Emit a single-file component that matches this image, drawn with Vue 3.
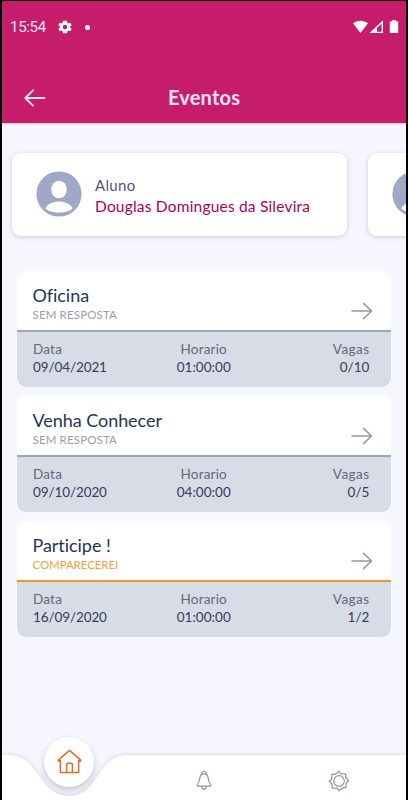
<script setup>
const students = [
  { id: 1, role: 'Aluno', name: 'Douglas Domingues da Silevira' },
  { id: 2 }
]
const events = [
  { title: 'Oficina', status: 'SEM RESPOSTA', date: '09/04/2021', time: '01:00:00', seats: '0/10', key: 'oficina' },
  { title: 'Venha Conhecer', status: 'SEM RESPOSTA', date: '09/10/2020', time: '04:00:00', seats: '0/5', key: 'venha' },
  { title: 'Participe !', status: 'COMPARECEREI', date: '16/09/2020', time: '01:00:00', seats: '1/2', key: 'participe', going: true }
]
</script>

<template>
  <div class="frame">
    <div class="screen">
      <header class="header">
        <div class="statusbar">
          <span class="clock">15:54</span>
          <svg class="gear" viewBox="2 2 20 20"><path fill="#fff" fill-rule="evenodd" d="M19.4 13a7.500 7.500 0 0 0 0-2l2.100-1.600-2-3.500-2.500 1a7 7 0 0 0-1.700-1L15 3H9l-.4 2.900a7 7 0 0 0-1.700 1l-2.500-1-2 3.500L4.600 11a7.500 7.500 0 0 0 0 2l-2.100 1.600 2 3.500 2.500-1a7 7 0 0 0 1.700 1L9 21h6l.4-2.900a7 7 0 0 0 1.700-1l2.500 1 2-3.500zM12 15.300a3.300 3.300 0 1 1 0-6.600 3.300 3.300 0 0 1 0 6.600z" /></svg>
          <i class="dot"></i>
          <svg class="signals" viewBox="0 0 46 14">
            <path fill="#fff" d="M0 3.200C4-.2 11-.2 15 3.200L7.500 13z" />
            <path fill="#fff" fill-rule="evenodd" d="M16.500 13 30 .3V13zM24 11.700h4.600V3.600L24 8z" />
            <path fill="#fff" d="M39 .2h4v1h1.500q.7 0 .7.800v10.300q0 .8-.8.800h-6.800q-.8 0-.8-.8V2q0-.8.8-.8H39z" />
          </svg>
        </div>
        <div class="titlebar">
          <svg class="back" viewBox="0 0 22 18"><path d="M20.500 9H1.500M9 1.300 1.300 9 9 16.700" /></svg>
          <h1>Eventos</h1>
        </div>
      </header>

      <section class="students">
        <article v-for="s in students" :key="s.id" class="student">
          <svg class="avatar" viewBox="0 0 46 46">
            <circle cx="23" cy="23" r="22.600" fill="#9fa8c7" />
            <ellipse cx="23" cy="18.500" rx="7.800" ry="8.700" fill="#fff" />
            <path fill="#fff" d="M9.300 37.200C12 32.500 18 30.500 23 30.500s11 2 13.700 6.700C32 43 14 43 9.300 37.200z" />
          </svg>
          <div v-if="s.name">
            <div class="role">{{ s.role }}</div>
            <div class="name">{{ s.name }}</div>
          </div>
        </article>
      </section>

      <main class="events">
        <article v-for="e in events" :key="e.key" class="event" :class="{ going: e.going }">
          <div class="summary">
            <div>
              <h2>{{ e.title }}</h2>
              <div class="answer">{{ e.status }}</div>
            </div>
            <svg class="go" viewBox="0 0 22 18"><path d="M1 9H20M12.500 1.300 20.500 9l-8 7.700" /></svg>
          </div>
          <div class="details">
            <div><span class="label">Data</span><span class="value date">{{ e.date }}</span></div>
            <div class="center"><span class="label">Horario</span><span class="value">{{ e.time }}</span></div>
            <div class="right"><span class="label">Vagas</span><span class="value">{{ e.seats }}</span></div>
          </div>
        </article>
      </main>

      <nav class="nav">
        <svg class="wave" viewBox="0 0 404 66">
          <path fill="#fff" d="M0 21H7C38 21 36 62 67 62S94 21 125 21H404V66H0z" />
        </svg>
        <div class="tab home">
          <span class="bubble">
            <svg viewBox="0 0 26 26"><path d="M2.800 12.600H1.500V11.300L13 1.500l11.500 9.800v1.300h-1.300M3.500 12v12.500h19V12M10 24.500V16q0-1.200 1.200-1.200h3.600q1.200 0 1.200 1.200v8.500" /></svg>
          </span>
        </div>
        <div class="tab">
          <svg class="bell" viewBox="0 0 16 20"><path d="M5.800 4.200a2.300 2.300 0 1 1 4.400 0M8 3.800c-2.900 0-4 1.800-4.200 4.500C3.600 12 2.700 13.200 1.200 14.600q-.7 1.600.9 1.600h11.800q1.600 0 .9-1.600C13.300 13.200 12.400 12 12.200 8.300 12 5.600 10.900 3.800 8 3.800zM5.600 16.700a2.400 2.400 0 0 0 4.800 0" /></svg>
        </div>
        <div class="tab">
          <svg class="settings" viewBox="0 0 22 22">
            <path d="M11 1.200Q12.200 4 14 3.800T17.900 4.100Q17.200 6.800 18.200 8T20.800 11Q18 12.200 18.200 14T17.900 17.900Q15.200 17.200 14 18.200T11 20.800Q9.800 18 8 18.200T4.100 17.900Q4.800 15.200 3.800 14T1.200 11Q4 9.800 3.800 8T4.100 4.100Q6.800 4.800 8 3.800T11 1.200z" />
            <circle cx="11" cy="11" r="5.300" />
          </svg>
        </div>
      </nav>
    </div>
  </div>
</template>

<style>
body { margin: 0; background: #000; }
</style>

<style scoped>
* { box-sizing: border-box; }
.frame { height: 800px; padding: 1px 2px 0; background: #000; font-family: Lato, "Noto Sans", sans-serif; }
.screen { height: 799px; display: flex; flex-direction: column; overflow: hidden; background: #f6f7fe; }
svg { display: block; flex: none; }
.header { height: 121.500px; flex: none; background: #c51d6a; color: #fff; box-shadow: 0 1px 2px #ddbccf; }
.statusbar { height: 52px; display: flex; align-items: center; padding: 0 7px 0 8px; }
.clock { width: 37px; font: 15px Roboto, sans-serif; letter-spacing: -.3px; color: #ffe6f3; }
.gear { width: 14px; height: 14px; margin-left: 10.500px; }
.dot { width: 5px; height: 5px; margin-left: 13px; border-radius: 50%; background: #fff; }
.signals { width: 46px; height: 14px; margin-left: auto; }
.titlebar { height: 69px; padding: 20px 22px 0; display: grid; grid-template-columns: 22px 1fr 22px; align-items: center; }
.back { width: 22px; height: 18px; fill: none; stroke: #ffe5f3; stroke-width: 1.800; stroke-linecap: round; stroke-linejoin: round; }
h1 { margin: 0; padding-bottom: 2px; text-align: center; font-size: 20px; line-height: 26px; font-weight: 700; letter-spacing: .2px; color: #ffe3f1; }
.students { display: flex; gap: 20.500px; padding: 30px 0 0 10px; height: 149px; flex: none; }
.student { width: 335px; height: 83.500px; flex: none; display: flex; align-items: center; gap: 13px; padding-left: 24px; border-radius: 9px; background: #fff; box-shadow: 0 1px 5px rgba(55, 60, 85, .23); }
.avatar { width: 46px; height: 46px; }
.role { font-size: 15px; line-height: 21px; letter-spacing: .35px; color: #4f576f; padding-top: 3px; }
.name { font-size: 15.500px; line-height: 21px; letter-spacing: .2px; color: #ad0058; white-space: nowrap; }
.events { display: flex; flex-direction: column; gap: 10px; padding: 0 15.500px 0 15px; }
.event { height: 115px; padding-bottom: .5px; border-radius: 9px; overflow: hidden; background: #fff; box-shadow: 0 0 4px rgba(255, 255, 255, .9); }
.summary { height: 60px; display: flex; justify-content: space-between; padding: 12px 18px 0 15.500px; border-bottom: 2px solid #9ba5bd; }
h2 { margin: 0; font-size: 18px; line-height: 23px; font-weight: 400; letter-spacing: -.05px; color: #263453; }
.answer { font-size: 11.500px; line-height: 15px; letter-spacing: .15px; color: #9a9eaf; }
.going .summary { border-color: #e99a2d; }
.going .answer { color: #eea23c; letter-spacing: -.08px; }
.go { width: 22px; height: 18px; margin-top: 18px; fill: none; stroke: #9499ab; stroke-width: 1.600; stroke-linecap: round; stroke-linejoin: round; }
.details { height: 55px; display: grid; grid-template-columns: 1fr 1fr 1fr; padding: 8px 21px 0 16px; background: #d7dce6; }
.details span { display: block; line-height: 18px; }
.label { font-size: 13.500px; letter-spacing: .2px; color: #62697e; }
.value { font-size: 13.500px; letter-spacing: .05px; color: #343e5a; }
.date { letter-spacing: -.1px; }
.center { text-align: center; padding-left: 5px; }
.right { text-align: right; }
.right .label { letter-spacing: .45px; }
.nav { position: relative; height: 66px; flex: none; margin-top: auto; display: grid; grid-template-columns: 134.500px 134.500px 1fr; }
.wave { position: absolute; inset: 0; width: 404px; height: 66px; filter: drop-shadow(0 -1px 2px rgba(60, 65, 90, .16)); }
.tab { position: relative; display: flex; justify-content: center; padding-top: 35.500px; }
.home { padding-top: 2.500px; }
.bubble { width: 50px; height: 50px; border-radius: 50%; display: grid; place-items: center; background: #fff; box-shadow: 0 3px 6px rgba(40, 45, 65, .25); }
.bubble svg { width: 25px; height: 25px; fill: none; stroke: #dc7226; stroke-width: 1.600; stroke-linejoin: round; stroke-linecap: round; }
.bell { width: 16px; height: 20px; fill: none; stroke: #8e969e; stroke-width: 1.200; }
.settings { width: 22px; height: 22px; fill: none; stroke: #8e999f; stroke-width: 1.200; stroke-linejoin: round; }
</style>
